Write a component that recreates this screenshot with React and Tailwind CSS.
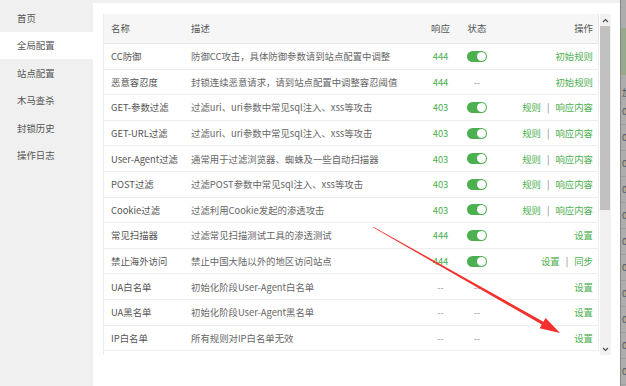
import React from 'react';

// 左侧菜单
const menu = ['首页', '全局配置', '站点配置', '木马查杀', '封锁历史', '操作日志'];

// 规则列表
const rules = [
  { name: 'CC防御', desc: '防御CC攻击，具体防御参数请到站点配置中调整', code: '444', on: true, ops: ['初始规则'] },
  { name: '恶意容忍度', desc: '封锁连续恶意请求，请到站点配置中调整容忍阈值', code: '444', on: null, ops: ['初始规则'] },
  { name: 'GET-参数过滤', desc: '过滤uri、uri参数中常见sql注入、xss等攻击', code: '403', on: true, ops: ['规则', '响应内容'] },
  { name: 'GET-URL过滤', desc: '过滤uri、uri参数中常见sql注入、xss等攻击', code: '403', on: true, ops: ['规则', '响应内容'] },
  { name: 'User-Agent过滤', desc: '通常用于过滤浏览器、蜘蛛及一些自动扫描器', code: '403', on: true, ops: ['规则', '响应内容'] },
  { name: 'POST过滤', desc: '过滤POST参数中常见sql注入、xss等攻击', code: '403', on: true, ops: ['规则', '响应内容'] },
  { name: 'Cookie过滤', desc: '过滤利用Cookie发起的渗透攻击', code: '403', on: true, ops: ['规则', '响应内容'] },
  { name: '常见扫描器', desc: '过滤常见扫描测试工具的渗透测试', code: '444', on: true, ops: ['设置'] },
  { name: '禁止海外访问', desc: '禁止中国大陆以外的地区访问站点', code: '444', on: true, ops: ['设置', '同步'] },
  { name: 'UA白名单', desc: '初始化阶段User-Agent白名单', code: null, on: null, ops: ['设置'] },
  { name: 'UA黑名单', desc: '初始化阶段User-Agent黑名单', code: null, on: null, ops: ['设置'] },
  { name: 'IP白名单', desc: '所有规则对IP白名单无效', code: null, on: null, ops: ['设置'] },
];

const cols = 'grid grid-cols-[80px_237px_39px_34px_106px] items-center';

function Toggle() {
  return (
    <div className="w-[20px] h-[11px] rounded-full bg-[#4cb050] flex items-center justify-end pr-[1px]">
      <div className="w-[9px] h-[9px] rounded-full bg-white" />
    </div>
  );
}

function Ops({ ops }) {
  return (
    <div className="flex justify-end items-center gap-[6px] pr-[7px] text-[#4cb050]">
      {ops.map((op, i) => (
        <React.Fragment key={op}>
          {i > 0 && <span className="text-[#888]">|</span>}
          <span>{op}</span>
        </React.Fragment>
      ))}
    </div>
  );
}

export default function App() {
  return (
    <div
      className="relative w-[626px] h-[386px] flex bg-[#f0f0f0] overflow-hidden text-[9.4px] text-[#555]"
      style={{ fontFamily: '"Noto Sans CJK SC", "Noto Sans", sans-serif' }}
    >
      {/* 侧边栏 */}
      <div className="w-[93px] pt-[4px] shrink-0">
        {menu.map((m, i) => (
          <div
            key={m}
            className={
              'h-[27.5px] flex items-center pl-[17px] ' + (i === 1 ? 'bg-white' : '')
            }
          >
            {m}
          </div>
        ))}
      </div>

      {/* 主内容 */}
      <div className="w-[527px] mt-[3px] bg-white pl-[10px] pt-[11px] pr-[9px]">
        <div className="flex h-[341px]">
          <div className="w-[497px] border-l border-[#ececec] overflow-hidden">
            <div className={cols + ' h-[30px] bg-[#f6f6f6] border-b border-[#e6e6e6] border-r'}>
              <div className="pl-[7px]">名称</div>
              <div className="pl-[7px]">描述</div>
              <div className="text-center">响应</div>
              <div className="text-center">状态</div>
              <div className="text-right pr-[7px]">操作</div>
            </div>
            {rules.map((r) => (
              <div key={r.name} className={cols + ' h-[25.6px] border-b border-r border-[#eeeeee]'}>
                <div className="pl-[7px] whitespace-nowrap">{r.name}</div>
                <div className="pl-[7px] whitespace-nowrap text-[#666]">{r.desc}</div>
                <div className="text-center">
                  {r.code ? <span className="text-[#4cb050]">{r.code}</span> : <span className="text-[#999]">--</span>}
                </div>
                <div className="flex justify-center">
                  {r.on ? <Toggle /> : <span className="text-[#999]">--</span>}
                </div>
                <Ops ops={r.ops} />
              </div>
            ))}
          </div>

          {/* 滚动条 */}
          <div className="w-[11px] ml-[1px] bg-[#f1f1f1] flex flex-col">
            <div className="h-[12px] flex items-center justify-center">
              <svg width="7" height="5" viewBox="0 0 7 5">
                <path d="M1 4 L3.5 1.5 L6 4" fill="none" stroke="#505050" strokeWidth="1.2" />
              </svg>
            </div>
            <div className="w-[10px] h-[184px] bg-[#c1c1c1]" />
            <div className="flex-1" />
            <div className="h-[12px] flex items-center justify-center">
              <svg width="7" height="5" viewBox="0 0 7 5">
                <path d="M1 1 L3.5 3.5 L6 1" fill="none" stroke="#505050" strokeWidth="1.2" />
              </svg>
            </div>
          </div>
        </div>
      </div>

      {/* 右侧背景窗口的边缘 */}
      <div className="w-[6px] shrink-0 bg-[#adadad] border-l border-[#868686] flex flex-col overflow-hidden text-[#555] text-[9.4px]">
        <div className="h-[28px]" />
        <div className="h-[47px] bg-[#97aa8c]" />
        <div className="h-[24px] flex items-end pl-[1px]">加</div>
        {['0', '0', '0', '0', '0', '0', '0', '0', '0', '0', '0'].map((z, i) => (
          <div key={i} className="h-[26px] flex items-center pl-[1px] border-b border-[#a0a0a0]">
            {z}
          </div>
        ))}
      </div>

      {/* 红色箭头标注 */}
      <svg className="absolute inset-0 pointer-events-none" width="626" height="386">
        <polygon
          points="373.2,226.65 543.4,321.7 545.6,317.9 560,333 539.6,328.3 541.8,324.5 372.8,227.35"
          fill="#f3302b"
        />
      </svg>
    </div>
  );
}
